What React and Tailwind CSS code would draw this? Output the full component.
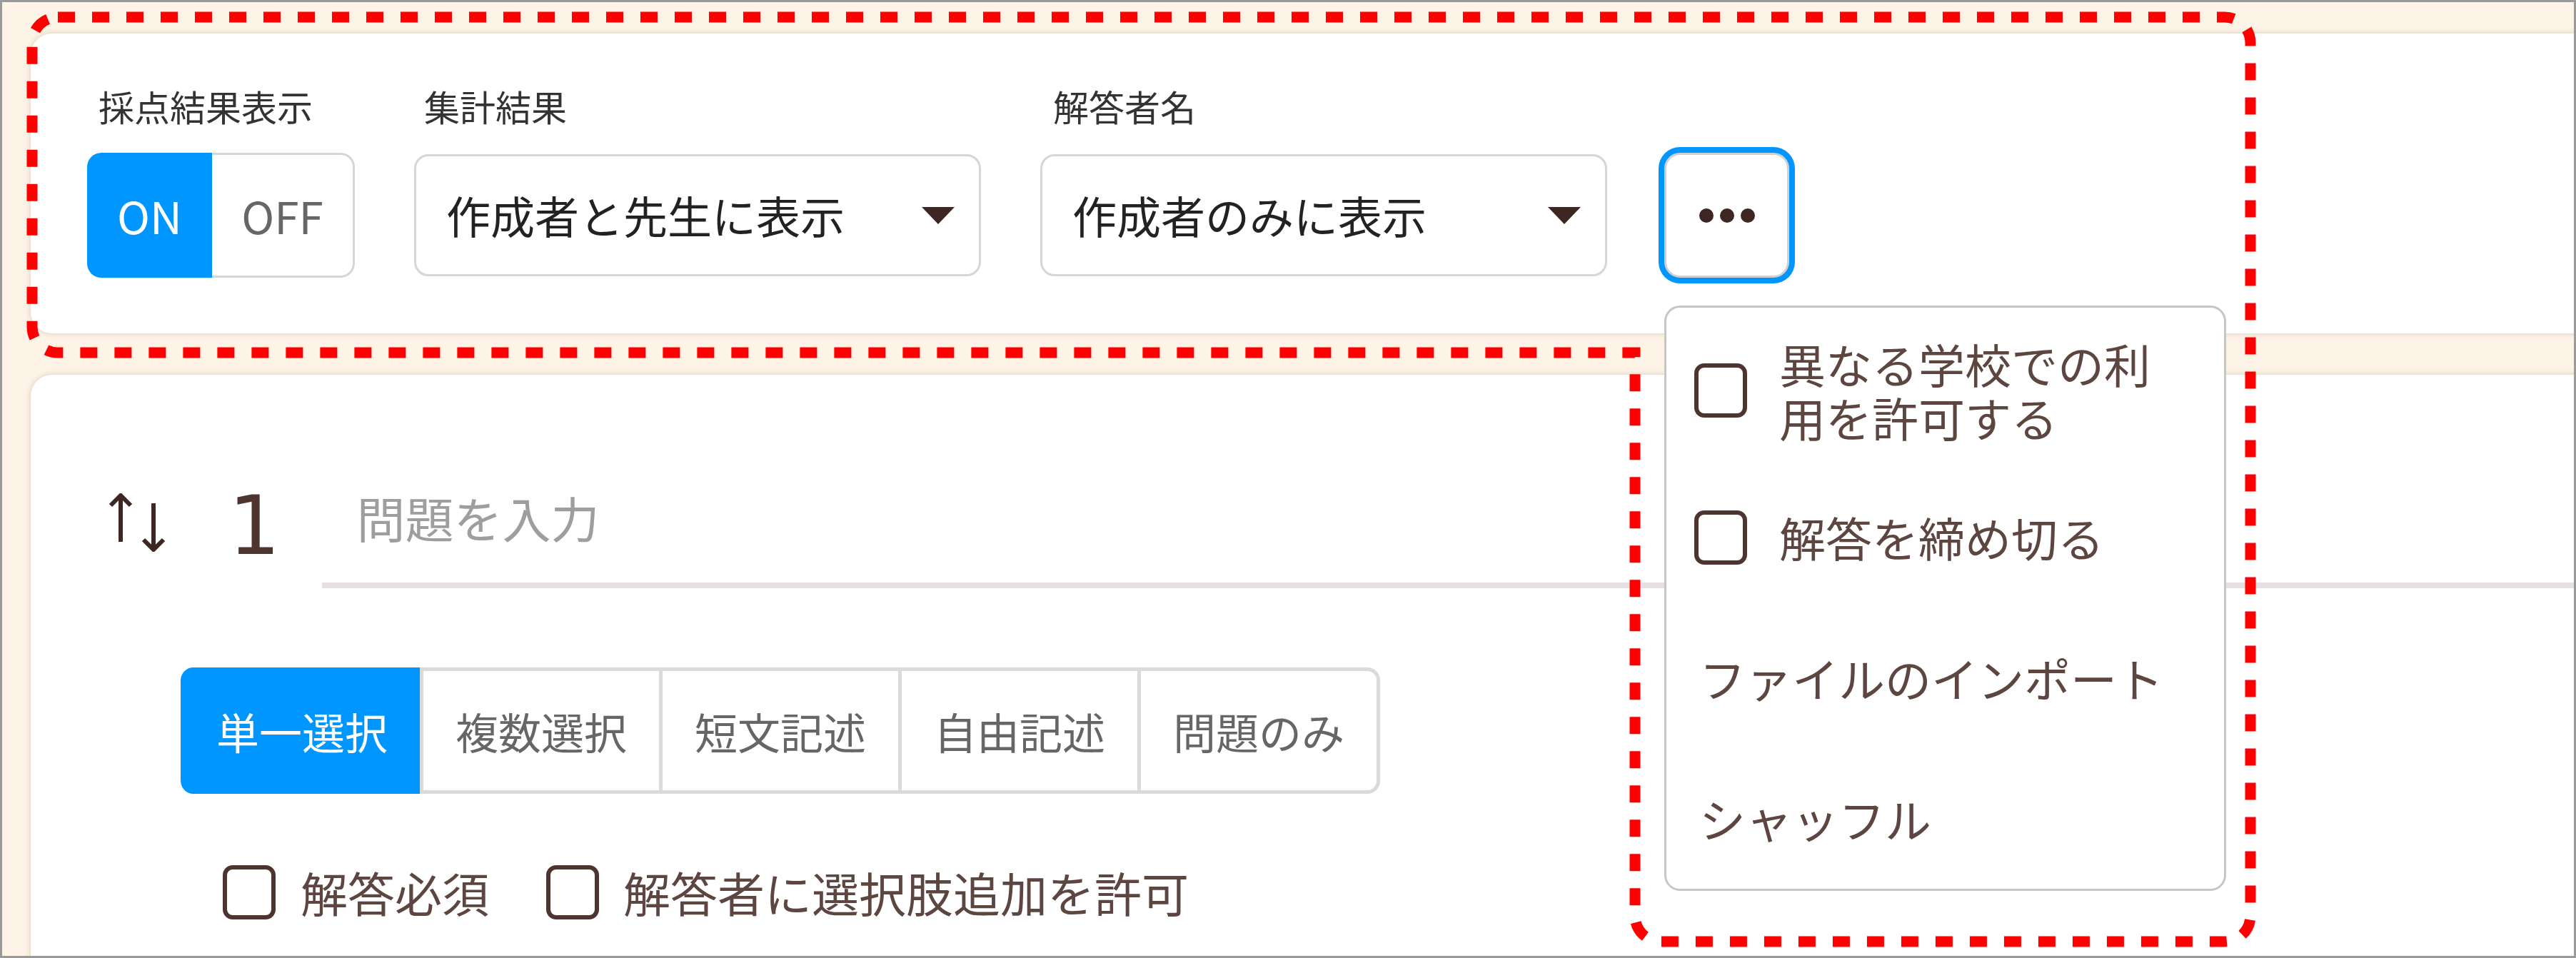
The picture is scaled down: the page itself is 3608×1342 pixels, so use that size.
import { useState } from "react";

const types = ["単一選択", "複数選択", "短文記述", "自由記述", "問題のみ"];

function Box() {
  return (
    <span className="block h-[76px] w-[74px] shrink-0 rounded-[14px] border-[6px] border-[#4e342e] bg-white" />
  );
}

function Caret() {
  return (
    <svg width="46" height="24" viewBox="0 0 46 24" className="shrink-0">
      <path d="M0 0h46L23 24z" fill="#3e2723" />
    </svg>
  );
}

function Select({ value }) {
  return (
    <div className="flex h-[171px] w-[794px] items-center justify-between rounded-[20px] border-[3px] border-[#d6d6d6] bg-white pl-[42px] pr-[34px] text-[62px] text-[#222]">
      <span>{value}</span>
      <Caret />
    </div>
  );
}

function SortIcon() {
  return (
    <svg width="86" height="82" viewBox="0 0 86 82" fill="none" stroke="#3e2723" strokeWidth="6">
      <path d="M20 68V3" />
      <path d="M6 17 20 3l14 14" strokeLinejoin="miter" />
      <path d="M66 14v65" />
      <path d="M52 65l14 14 14-14" strokeLinejoin="miter" />
    </svg>
  );
}

export default function App() {
  const [active] = useState(0);

  return (
    <div className="relative h-[1342px] w-[3608px] overflow-hidden border-[3px] border-[#9a9a9a] bg-[#fdf3e6] font-['Noto_Sans_CJK_JP','Noto_Sans',sans-serif]">
      <div className="flex flex-col pl-[40px] pt-[44px]">
        {/* settings card */}
        <div className="h-[420px] w-[3640px] rounded-[30px] bg-white pl-[79px] pt-[71px] shadow-[0_0_10px_rgba(0,0,0,0.16)]">
          <div className="flex items-end gap-[83px]">
            <div className="flex flex-col">
              <span className="pl-[16px] text-[50px] leading-[60px] text-[#333]">採点結果表示</span>
              <div className="mt-[36px] flex h-[175px] w-[375px] text-[62px]">
                <div className="flex w-[175px] items-center justify-center rounded-l-[20px] bg-[#0096ff] text-white">
                  ON
                </div>
                <div className="flex flex-1 items-center justify-center rounded-r-[20px] border-[3px] border-l-0 border-[#d6d6d6] bg-white text-[#666]">
                  OFF
                </div>
              </div>
            </div>
            <div className="flex flex-col">
              <span className="pl-[14px] text-[50px] leading-[60px] text-[#333]">集計結果</span>
              <div className="mt-[38px] mb-[2px]">
                <Select value="作成者と先生に表示" />
              </div>
            </div>
            <div className="flex flex-col">
              <span className="pl-[18px] text-[50px] leading-[60px] text-[#333]">解答者名</span>
              <div className="mt-[38px] mb-[2px]">
                <Select value="作成者のみに表示" />
              </div>
            </div>
            <button
              type="button"
              className="-ml-[3px] flex h-[175px] w-[175px] items-center justify-center gap-[9px] rounded-[22px] border-[3px] border-[#d0d0d0] bg-white shadow-[0_0_0_8px_#0096ff]"
            >
              <span className="h-[20px] w-[20px] rounded-full bg-[#3e2723]" />
              <span className="h-[20px] w-[20px] rounded-full bg-[#3e2723]" />
              <span className="h-[20px] w-[20px] rounded-full bg-[#3e2723]" />
            </button>
          </div>
        </div>

        {/* question card */}
        <div className="mt-[58px] h-[1000px] w-[3640px] rounded-[30px] bg-white pl-[106px] pt-[125px] shadow-[0_0_10px_rgba(0,0,0,0.16)]">
          <div className="flex h-[174px] items-stretch">
            <div className="-mt-[10px] flex items-center">
              <SortIcon />
            </div>
            <div className="ml-[85px] flex items-center font-['DejaVu_Sans',sans-serif] text-[114px] leading-none text-[#4e342e]">
              1
            </div>
            <div className="ml-[58px] flex flex-1 items-center border-b-[8px] border-[#e6dfe3] pb-[16px] pl-[49px] text-[68px] text-[#9e9e9e]">
              問題を入力
            </div>
          </div>

          <div className="ml-[104px] mt-[111px] flex h-[177px]">
            {types.map((t, i) => (
              <div
                key={t}
                className={[
                  "flex w-[340px] items-center justify-center border-[5px] text-[60px]",
                  i > 0 ? "-ml-[5px]" : "",
                  i === 0 ? "rounded-l-[18px]" : "",
                  i === types.length - 1 ? "rounded-r-[18px]" : "",
                  i === active
                    ? "border-[#0096ff] bg-[#0096ff] text-white"
                    : "border-[#dadada] bg-white text-[#666]",
                ].join(" ")}
              >
                {t}
              </div>
            ))}
          </div>

          <div className="ml-[163px] mt-[88px] flex items-center text-[66px] text-[#5d4540]">
            <Box />
            <span className="ml-[35px]">解答必須</span>
            <span className="ml-[80px]">
              <Box />
            </span>
            <span className="ml-[34px]">解答者に選択肢追加を許可</span>
          </div>
        </div>
      </div>

      {/* more menu */}
      <div className="absolute left-[2328px] top-[425px] w-[787px] rounded-[22px] border-[3px] border-[#c6c6c6] bg-white pt-[8px] text-[65px] leading-[75px] text-[#5d4540]">
        <div className="flex h-[215px] items-center pl-[39px]">
          <Box />
          <span className="ml-[45px] w-[540px]">異なる学校での利用を許可する</span>
        </div>
        <div className="flex h-[197px] items-center pl-[39px]">
          <Box />
          <span className="ml-[45px]">解答を締め切る</span>
        </div>
        <div className="flex h-[197px] items-center pl-[46px]">ファイルのインポート</div>
        <div className="flex h-[197px] items-center pl-[46px]">シャッフル</div>
      </div>

      {/* annotation outline */}
      <svg
        className="pointer-events-none absolute -left-[3px] -top-[3px]"
        width="3608"
        height="1342"
        viewBox="0 0 3608 1342"
        fill="none"
      >
        <path
          d="M81 24H3116A36 36 0 0 1 3152 60V1283A36 36 0 0 1 3116 1319H2326A36 36 0 0 1 2290 1283V494H81A36 36 0 0 1 45 458V60A36 36 0 0 1 81 24Z"
          stroke="#ff0000"
          strokeWidth="15"
          strokeDasharray="24 24"
        />
      </svg>
    </div>
  );
}
